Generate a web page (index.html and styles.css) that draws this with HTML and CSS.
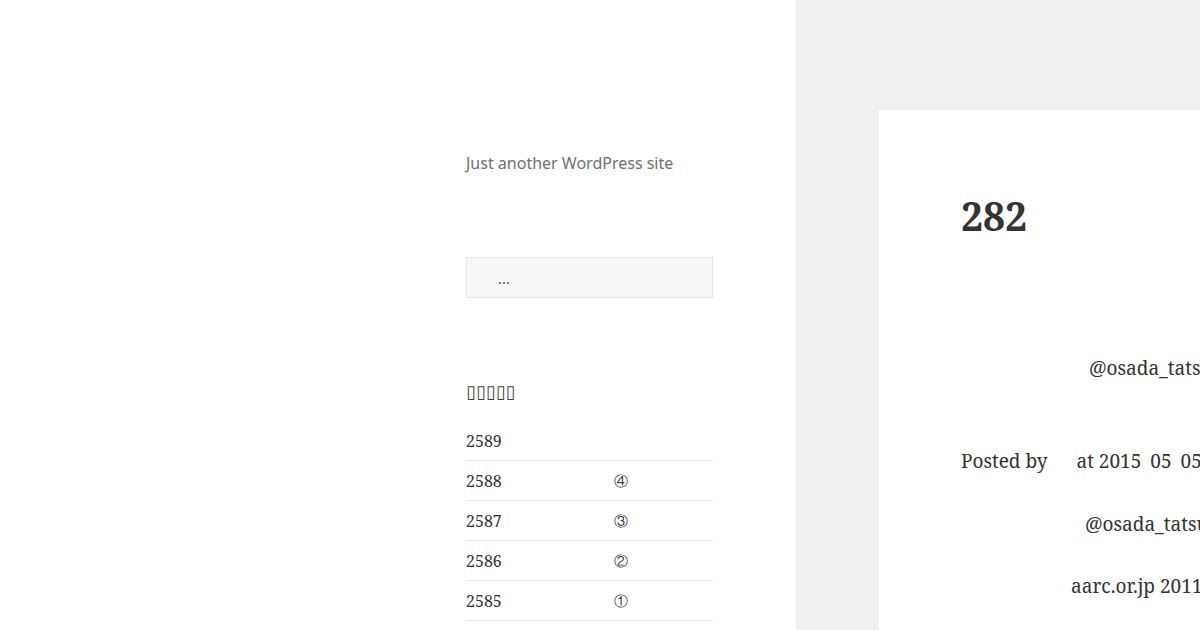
FILE: index.html
```html
<!DOCTYPE html>
<html lang="ja">
<head>
<meta charset="utf-8">
<title>282</title>
<link rel="stylesheet" href="styles.css">
</head>
<body>
<div class="page">
  <aside class="sidebar">
    <p class="site-description">Just another WordPress site</p>
    <form class="search-form">
      <input class="search-field" type="search" placeholder="…">
    </form>
    <section class="widget">
      <h2 class="widget-title">▯▯▯▯▯</h2>
      <ul class="recent-posts">
        <li><span class="num">2589</span><span class="mark"></span></li>
        <li><span class="num">2588</span><span class="mark">④</span></li>
        <li><span class="num">2587</span><span class="mark">③</span></li>
        <li><span class="num">2586</span><span class="mark">②</span></li>
        <li><span class="num">2585</span><span class="mark">①</span></li>
      </ul>
    </section>
  </aside>
  <main class="main">
    <article class="post">
      <h1 class="entry-title">282</h1>
      <div class="entry-content">
        <p class="line line-1">@osada_tatsuya</p>
        <p class="line line-2">Posted by<span class="gap-wide"></span>at 2015<span class="gap"></span>05<span class="gap"></span>05</p>
        <p class="line line-3">@osada_tatsuya</p>
        <p class="line line-4">aarc.or.jp 2011</p>
      </div>
    </article>
  </main>
</div>
</body>
</html>
```

FILE: styles.css
```css
html, body {
  margin: 0;
  padding: 0;
  height: 100%;
  overflow: hidden;
}

body {
  background: #f1f1f1;
  color: #333333;
  font-family: "Noto Serif", "DejaVu Serif", "Liberation Serif", serif;
}

.page {
  display: flex;
  height: 630px;
}

.sidebar {
  flex: 0 0 796px;
  box-sizing: border-box;
  width: 796px;
  background: #ffffff;
  box-shadow: 0 0 1px rgba(0, 0, 0, 0.15);
  padding: 0 83px 0 466px;
  position: relative;
  z-index: 1;
}

.site-description {
  margin: 152px 0 0;
  font-family: "Noto Sans", "Open Sans", sans-serif;
  font-size: 16px;
  line-height: 22px;
  color: #707070;
}

.search-form {
  margin-top: 83px;
}

.search-field {
  display: block;
  box-sizing: border-box;
  width: 247px;
  height: 41px;
  margin: 0;
  padding: 0 0 0 31px;
  border: 1px solid #e6e6e6;
  background: #f7f7f7;
  font-family: "Noto Sans", sans-serif;
  font-size: 15px;
  color: #333;
  outline: none;
}

.search-field::placeholder {
  color: #555;
}

.widget {
  margin-top: 84px;
}

.widget-title {
  margin: 0;
  font-family: "DejaVu Sans", sans-serif;
  font-weight: 400;
  font-size: 18px;
  line-height: 20px;
  color: #444;
  letter-spacing: 0;
}

.recent-posts {
  list-style: none;
  margin: 20px 0 0;
  padding: 0;
}

.recent-posts li {
  display: flex;
  align-items: center;
  height: 39px;
  border-bottom: 1px solid #e6e6e6;
  font-size: 16px;
  line-height: 24px;
  color: #333;
}

.recent-posts li:first-child {
  height: 38px;
}

.num {
  width: 148px;
}

.mark {
  font-size: 14px;
}

.main {
  flex: 1 1 auto;
  overflow: hidden;
  min-width: 0;
}

.post {
  box-sizing: border-box;
  width: 900px;
  margin: 110px 0 0 82px;
  min-height: 600px;
  background: #ffffff;
  box-shadow: 0 0 1px rgba(0, 0, 0, 0.15);
  padding: 78px 0 0 83px;
}

.entry-title {
  margin: 0;
  font-size: 39px;
  line-height: 56px;
  font-weight: 700;
  color: #333;
}

.entry-content {
  font-size: 19px;
  line-height: 30px;
}

.line {
  margin: 0;
  white-space: nowrap;
}

.line-1 {
  margin-top: 109px;
  padding-left: 128px;
}

.line-2 {
  margin-top: 63px;
}

.line-3 {
  margin-top: 33px;
  padding-left: 124px;
}

.line-4 {
  margin-top: 32px;
  padding-left: 110px;
}

.gap-wide {
  display: inline-block;
  width: 29px;
}

.gap {
  display: inline-block;
  width: 9px;
}
```
